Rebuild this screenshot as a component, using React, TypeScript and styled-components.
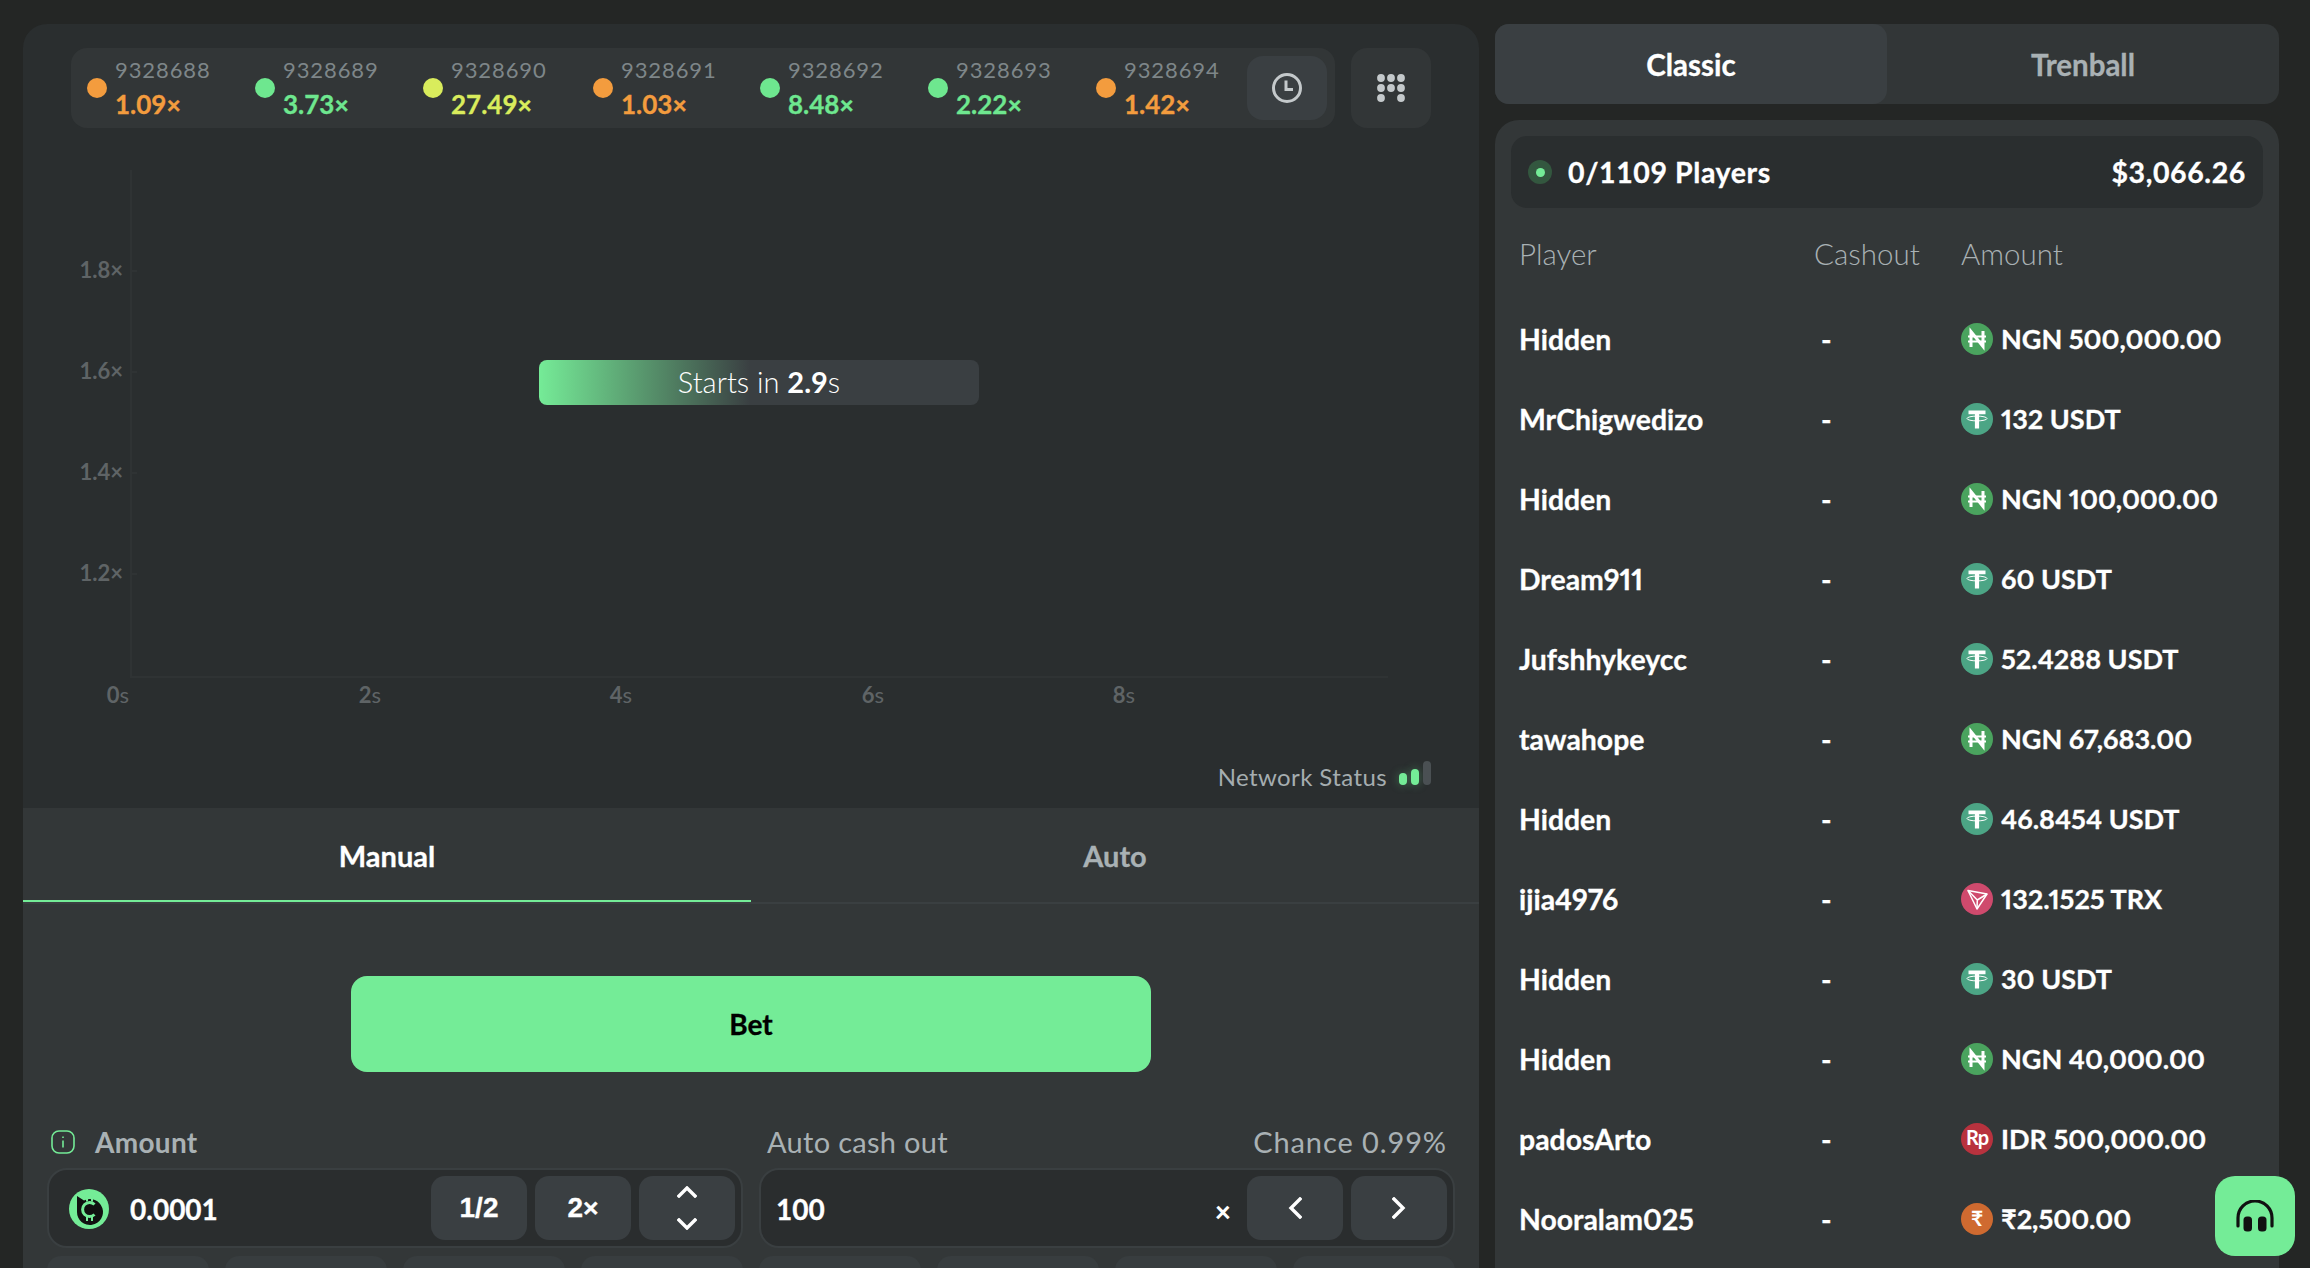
import React from "react";
import styled, { createGlobalStyle } from "styled-components";

const Global = createGlobalStyle`
  html, body { margin: 0; height: 100%; overflow: hidden; background: #242625; }
  #root { height: 100%; }
  * { box-sizing: border-box; }
  body { font-family: "Lato", "Liberation Sans", sans-serif; color: #fff; }
`;

const Page = styled.div`
  display: flex;
  gap: 16px;
  height: 1268px;
  padding: 24px 31px 0 23px;
  overflow: hidden;
  background: #242625;
`;

const LeftColumn = styled.main`
  flex: 0 0 1456px;
  display: flex;
  flex-direction: column;
  border-radius: 24px 24px 0 0;
  overflow: hidden;
  background: #2a2e2f;
`;

const ChartSection = styled.section`
  flex: 0 0 784px;
  display: flex;
  flex-direction: column;
  position: relative;
`;

const Toolbar = styled.div`
  display: flex;
  gap: 16px;
  padding: 24px 48px 0;
`;

const History = styled.div`
  flex: 1;
  height: 80px;
  display: flex;
  align-items: center;
  padding: 0 8px 0 16px;
  border-radius: 16px;
  background: #323637;
`;

const Round = styled.div<{ $w: number }>`
  flex: 0 0 ${(p) => p.$w}px;
  display: flex;
  align-items: center;
  gap: 8px;
  &:last-of-type { flex: 1; }
`;

const Dot = styled.span<{ $c: string }>`
  width: 20px;
  height: 20px;
  border-radius: 50%;
  background: ${(p) => p.$c};
`;

const RoundText = styled.div`
  display: flex;
  flex-direction: column;
`;

const RoundId = styled.span`
  font-size: 22px;
  line-height: 32px;
  letter-spacing: 0.9px;
  color: #7e8689;
`;

const RoundMult = styled.span<{ $c: string }>`
  font-size: 26px;
  line-height: 36px;
  font-weight: 700;
  -webkit-text-stroke: 0.3px currentColor;
  color: ${(p) => p.$c};
`;

const Times = styled.span`
  font-size: 0.95em;
  font-weight: 900;
`;

const SquareButton = styled.button<{ $tone: string; $w?: number; $h?: number; $r?: number }>`
  flex: 0 0 auto;
  width: ${(p) => p.$w ?? 80}px;
  height: ${(p) => p.$h ?? 64}px;
  display: flex;
  align-items: center;
  justify-content: center;
  padding: 0;
  border: 0;
  border-radius: ${(p) => p.$r ?? 14}px;
  background: ${(p) => p.$tone};
  color: #c4c9cb;
`;

const ChartCanvas = styled.div`
  position: relative;
  flex: 1;
`;

const ChartSvg = styled.svg`
  display: block;
  text {
    font-family: "Lato", "Liberation Sans", sans-serif;
    font-size: 22px;
    font-weight: 700;
    fill: #5f6466;
  }
  tspan { font-weight: 400; }
`;

const CountdownPill = styled.div`
  position: absolute;
  left: 516px;
  top: 232px;
  width: 440px;
  height: 45px;
  display: flex;
  align-items: center;
  justify-content: center;
  padding-bottom: 3px;
  border-radius: 8px;
  font-size: 29px;
  font-weight: 300;
  background: linear-gradient(90deg, #75eb97 0%, rgba(117, 235, 151, 0) 48%), #3a3f42;
  b { font-weight: 700; }
`;

const NetworkStatus = styled.div`
  position: absolute;
  right: 48px;
  bottom: 16px;
  display: flex;
  align-items: flex-end;
  gap: 12px;
  font-size: 24px;
  line-height: 30px;
  letter-spacing: 0.4px;
  color: #a5adb0;
`;

const Bars = styled.div`
  display: flex;
  align-items: flex-end;
  gap: 4px;
  margin-bottom: 7px;
`;

const Bar = styled.span<{ $h: number; $on?: boolean }>`
  width: 8px;
  height: ${(p) => p.$h}px;
  border-radius: 4px;
  background: ${(p) => (p.$on ? "#74ec97" : "#4a5053")};
  box-shadow: ${(p) => (p.$on ? "0 0 10px rgba(116,236,151,.35)" : "none")};
`;

const Controls = styled.section`
  flex: 1;
  background: #333738;
`;

const ModeTabs = styled.div`
  display: flex;
  height: 96px;
  border-bottom: 2px solid #3a3f41;
`;

const ModeTab = styled.div<{ $active?: boolean }>`
  flex: 1;
  height: 94px;
  display: flex;
  align-items: center;
  justify-content: center;
  padding-top: 2px;
  font-size: 29px;
  font-weight: 700;
  -webkit-text-stroke: 0.3px currentColor;
  color: ${(p) => (p.$active ? "#fff" : "#a9b1b4")};
  border-bottom: 2px solid ${(p) => (p.$active ? "#74ec97" : "transparent")};
`;

const ControlsBody = styled.div`
  padding: 72px 24px 0;
`;

const BetButton = styled.button`
  display: block;
  width: 800px;
  height: 96px;
  margin: 0 auto;
  border: 0;
  border-radius: 16px;
  background: #74ec97;
  color: #000;
  font: 700 28px "Lato", "Liberation Sans", sans-serif;
  -webkit-text-stroke: 0.3px #000;
`;

const FormGrid = styled.div`
  display: grid;
  grid-template-columns: 1fr 1fr;
  column-gap: 16px;
  margin-top: 48px;
`;

const LabelRow = styled.div`
  height: 48px;
  display: flex;
  align-items: center;
  justify-content: space-between;
  padding-bottom: 5px;
  font-size: 29px;
  letter-spacing: 0.3px;
  color: #a9b1b4;
`;

const LabelLeft = styled.span<{ $bold?: boolean }>`
  display: flex;
  align-items: center;
  gap: 20px;
  padding-left: ${(p) => (p.$bold ? 4 : 8)}px;
  font-weight: ${(p) => (p.$bold ? 700 : 400)};
  font-size: ${(p) => (p.$bold ? 28 : 29)}px;
`;

const ChanceText = styled.span`
  padding-right: 8px;
  letter-spacing: 0.9px;
`;

const InputBox = styled.div<{ $pad: number }>`
  height: 80px;
  display: flex;
  align-items: center;
  gap: 8px;
  padding: 0 6px 0 ${(p) => p.$pad}px;
  border: 2px solid #3a3f41;
  border-radius: 20px;
  background: #2a2d2e;
`;

const InputValue = styled.span`
  flex: 1;
  display: flex;
  align-items: center;
  gap: 21px;
  padding-top: 2px;
  font-size: 28px;
  font-weight: 700;
  -webkit-text-stroke: 0.3px currentColor;
`;

const SuffixX = styled.span`
  font-size: 28px;
  font-weight: 900;
  margin-right: 8px;
  padding-top: 6px;
`;

const QuickRow = styled.div`
  display: grid;
  grid-template-columns: repeat(4, 1fr);
  gap: 16px;
  margin-top: 8px;
`;

const QuickButton = styled.div`
  height: 64px;
  border-radius: 14px;
  background: #383d3f;
`;

const StepText = styled.span`
  font-size: 28px;
  font-weight: 700;
  -webkit-text-stroke: 0.3px currentColor;
  color: #fff;
`;

const StepStack = styled.span`
  display: flex;
  flex-direction: column;
  gap: 20px;
`;

const RightColumn = styled.aside`
  flex: 0 0 784px;
  display: flex;
  flex-direction: column;
  gap: 16px;
`;

const GameTabs = styled.div`
  height: 80px;
  display: flex;
  border-radius: 14px;
  background: #323637;
`;

const GameTab = styled.div<{ $active?: boolean }>`
  flex: 1;
  display: flex;
  align-items: center;
  justify-content: center;
  border-radius: 14px;
  font-size: 29.5px;
  font-weight: 700;
  -webkit-text-stroke: 0.3px currentColor;
  background: ${(p) => (p.$active ? "#3a3f42" : "transparent")};
  color: ${(p) => (p.$active ? "#fff" : "#a9b1b4")};
`;

const PlayersPanel = styled.div`
  flex: 1;
  padding: 16px 16px 0;
  border-radius: 24px 24px 0 0;
  background: #333738;
`;

const Summary = styled.div`
  height: 72px;
  display: flex;
  align-items: center;
  justify-content: space-between;
  padding: 0 17px;
  border-radius: 16px;
  background: #2a2e2f;
  font-size: 28.5px;
  font-weight: 700;
  letter-spacing: 0.6px;
  -webkit-text-stroke: 0.3px currentColor;
`;

const SummaryLeft = styled.span`
  display: flex;
  align-items: center;
  gap: 16px;
`;

const LiveDot = styled.span`
  width: 24px;
  height: 24px;
  display: flex;
  align-items: center;
  justify-content: center;
  border-radius: 50%;
  background: #33573f;
  &::after {
    content: "";
    width: 9px;
    height: 9px;
    border-radius: 50%;
    background: #74ec97;
  }
`;

const PlayerRow = styled.div<{ $head?: boolean }>`
  display: grid;
  grid-template-columns: 295px 147px 1fr;
  align-items: center;
  height: ${(p) => (p.$head ? 90 : 80)}px;
  padding-left: 8px;
  font-size: ${(p) => (p.$head ? 29.5 : 28.4)}px;
  font-weight: ${(p) => (p.$head ? 300 : 700)};
  font-variant-numeric: proportional-nums;
  padding-top: ${(p) => (p.$head ? 0 : 1)}px;
  -webkit-text-stroke: ${(p) => (p.$head ? "0" : "0.3px currentColor")};
  color: ${(p) => (p.$head ? "#a9b1b4" : "#fff")};
`;

const CashOut = styled.span`
  padding-left: 7px;
`;

const Stake = styled.span`
  display: flex;
  align-items: center;
  gap: 8px;
  font-size: 27px;
`;

const SupportButton = styled.button`
  position: fixed;
  left: 2215px;
  top: 1176px;
  width: 80px;
  height: 80px;
  display: flex;
  align-items: center;
  justify-content: center;
  padding: 0;
  border: 0;
  border-radius: 20px;
  background: #74ec97;
`;

const CoinSvg = styled.svg`
  display: block;
  flex: 0 0 auto;
  -webkit-text-stroke: 0;
  text { font-family: "Lato", "Liberation Sans", sans-serif; font-weight: 700; fill: #fff; }
`;

type Kind = "ngn" | "usdt" | "trx" | "idr" | "inr";

const Coin = ({ kind }: { kind: Kind }) => {
  const fill: Record<Kind, string> = { ngn: "#4aa35e", usdt: "#4ca585", trx: "#cf4a6d", idr: "#b8323e", inr: "#cf6a30" };
  return (
    <CoinSvg width="32" height="32" viewBox="0 0 32 32">
      <circle cx="16" cy="16" r="16" fill={fill[kind]} />
      {kind === "ngn" && (
        <g stroke="#fff" fill="none" strokeWidth="3">
          <path d="M10 24V8.5L22 23.5V8" />
          <path d="M7 13.5h18M7 18.5h18" strokeWidth="2.2" />
        </g>
      )}
      {kind === "usdt" && (
        <g fill="#fff">
          <path d="M7.5 7.5h17v3.8h-6.4v14.2h-4.2V11.3H7.5z" />
          <ellipse cx="16" cy="15.5" rx="10" ry="2.4" fill="none" stroke="#fff" strokeWidth="1" />
        </g>
      )}
      {kind === "trx" && (
        <g stroke="#fff" fill="none" strokeWidth="1.5" strokeLinejoin="round">
          <path d="M7 7.5l19 3.5-10 15z" />
          <path d="M7 7.5l9.3 9.5L26 11M16.3 17L16 26" />
        </g>
      )}
      {kind === "idr" && (
        <text x="16" y="22" fontSize="20" textAnchor="middle" letterSpacing="-1">Rp</text>
      )}
      {kind === "inr" && (
        <text x="16" y="23" fontSize="21" textAnchor="middle">₹</text>
      )}
    </CoinSvg>
  );
};

const BrandCoin = () => (
  <CoinSvg width="40" height="40" viewBox="0 0 40 40">
    <circle cx="20" cy="20" r="20" fill="#74ec97" />
    <path d="M8 7l7 4.5a13 13 0 1 1-7 11.5z" fill="#111" />
    <path d="M25.5 15.5a7 7 0 1 0 0 10" fill="none" stroke="#74ec97" strokeWidth="3" />
    <path d="M18 8.5v4M23 8.5v4M18 28v4M23 28v4" stroke="#74ec97" strokeWidth="2" />
  </CoinSvg>
);

const Chevron = ({ d, w, h }: { d: string; w: number; h: number }) => (
  <svg width={w} height={h} viewBox={`0 0 ${w} ${h}`} fill="none" stroke="#fff" strokeWidth="3.4" strokeLinecap="square">
    <path d={d} />
  </svg>
);

const ClockIcon = () => (
  <svg width="32" height="32" viewBox="0 0 32 32" fill="none" stroke="#c4c9cb" strokeWidth="3">
    <circle cx="16" cy="16" r="13.5" />
    <path d="M15 8.5V17.5H22" />
  </svg>
);

const GridIcon = () => {
  const pts = [[0, 0], [1, 0], [2, 0], [0, 1], [1, 1], [2, 1], [0, 2], [2, 2]];
  return (
    <svg width="28" height="28" viewBox="0 0 28 28">
      {pts.map(([x, y]) => (
        <circle key={`${x}${y}`} cx={4 + x * 10} cy={4 + y * 10} r="3.9" fill="#c4c9cb" />
      ))}
    </svg>
  );
};

const rounds: [string, string, string, number][] = [
  ["9328688", "1.09", "#f39c3e", 168],
  ["9328689", "3.73", "#6ee78f", 168],
  ["9328690", "27.49", "#d9ec5c", 170],
  ["9328691", "1.03", "#f39c3e", 167],
  ["9328692", "8.48", "#6ee78f", 168],
  ["9328693", "2.22", "#6ee78f", 168],
  ["9328694", "1.42", "#f39c3e", 168],
];

const players: [string, Kind, string][] = [
  ["Hidden", "ngn", "NGN 500,000.00"],
  ["MrChigwedizo", "usdt", "132 USDT"],
  ["Hidden", "ngn", "NGN 100,000.00"],
  ["Dream911", "usdt", "60 USDT"],
  ["Jufshhykeycc", "usdt", "52.4288 USDT"],
  ["tawahope", "ngn", "NGN 67,683.00"],
  ["Hidden", "usdt", "46.8454 USDT"],
  ["ijia4976", "trx", "132.1525 TRX"],
  ["Hidden", "usdt", "30 USDT"],
  ["Hidden", "ngn", "NGN 40,000.00"],
  ["padosArto", "idr", "IDR 500,000.00"],
  ["Nooralam025", "inr", "₹2,500.00"],
];

const yTicks = [["1.8", 143], ["1.6", 244], ["1.4", 345], ["1.2", 446]] as const;
const xTicks = [["0", 95], ["2", 347], ["4", 598], ["6", 850], ["8", 1101]] as const;

export default function App() {
  return (
    <Page>
      <Global />
      <LeftColumn>
        <ChartSection>
          <Toolbar>
            <History>
              {rounds.map(([id, mult, color, w]) => (
                <Round key={id} $w={w}>
                  <Dot $c={color} />
                  <RoundText>
                    <RoundId>{id}</RoundId>
                    <RoundMult $c={color}>
                      {mult}
                      <Times>×</Times>
                    </RoundMult>
                  </RoundText>
                </Round>
              ))}
              <SquareButton $tone="#3a3f42" $r={16}>
                <ClockIcon />
              </SquareButton>
            </History>
            <SquareButton $tone="#323637" $h={80} $r={16}>
              <GridIcon />
            </SquareButton>
          </Toolbar>
          <ChartCanvas>
            <ChartSvg width="1456" height="680" viewBox="0 0 1456 680">
              <path d="M108 42V549H1365" fill="none" stroke="#2f3334" strokeWidth="2" />
              {yTicks.map(([label, y]) => (
                <g key={label}>
                  <path d={`M108 ${y}h6`} stroke="#2f3334" strokeWidth="2" />
                  <text x="100" y={y + 7} textAnchor="end">{label}×</text>
                </g>
              ))}
              {xTicks.map(([label, x]) => (
                <text key={label} x={x} y="575" textAnchor="middle">{label}<tspan>s</tspan></text>
              ))}
            </ChartSvg>
            <CountdownPill>
              <span>Starts in <b>2.9</b>s</span>
            </CountdownPill>
            <NetworkStatus>
              Network Status
              <Bars>
                <Bar $h={12} $on />
                <Bar $h={16} $on />
                <Bar $h={24} />
              </Bars>
            </NetworkStatus>
          </ChartCanvas>
        </ChartSection>
        <Controls>
          <ModeTabs>
            <ModeTab $active>Manual</ModeTab>
            <ModeTab>Auto</ModeTab>
          </ModeTabs>
          <ControlsBody>
            <BetButton>Bet</BetButton>
            <FormGrid>
              <div>
                <LabelRow>
                  <LabelLeft $bold>
                    <svg width="24" height="24" viewBox="0 0 24 24" fill="none" stroke="#74ec97" strokeWidth="1.6">
                      <rect x="1" y="1" width="22" height="22" rx="7" />
                      <path d="M12 10.5v7M12 6.5v1.6" />
                    </svg>
                    Amount
                  </LabelLeft>
                </LabelRow>
                <InputBox $pad={20}>
                  <InputValue>
                    <BrandCoin />
                    0.0001
                  </InputValue>
                  <SquareButton $tone="#3a3f42" $w={96}><StepText>1/2</StepText></SquareButton>
                  <SquareButton $tone="#3a3f42" $w={96}><StepText>2<Times>×</Times></StepText></SquareButton>
                  <SquareButton $tone="#3a3f42" $w={96}>
                    <StepStack>
                      <Chevron w={20} h={12} d="M2 10L10 2L18 10" />
                      <Chevron w={20} h={12} d="M2 2L10 10L18 2" />
                    </StepStack>
                  </SquareButton>
                </InputBox>
                <QuickRow>
                  <QuickButton />
                  <QuickButton />
                  <QuickButton />
                  <QuickButton />
                </QuickRow>
              </div>
              <div>
                <LabelRow>
                  <LabelLeft>Auto cash out</LabelLeft>
                  <ChanceText>Chance 0.99%</ChanceText>
                </LabelRow>
                <InputBox $pad={15}>
                  <InputValue>100</InputValue>
                  <SuffixX>×</SuffixX>
                  <SquareButton $tone="#3a3f42" $w={96}>
                    <Chevron w={14} h={22} d="M12 2L3 11L12 20" />
                  </SquareButton>
                  <SquareButton $tone="#3a3f42" $w={96}>
                    <Chevron w={14} h={22} d="M2 2L11 11L2 20" />
                  </SquareButton>
                </InputBox>
                <QuickRow>
                  <QuickButton />
                  <QuickButton />
                  <QuickButton />
                  <QuickButton />
                </QuickRow>
              </div>
            </FormGrid>
          </ControlsBody>
        </Controls>
      </LeftColumn>
      <RightColumn>
        <GameTabs>
          <GameTab $active>Classic</GameTab>
          <GameTab>Trenball</GameTab>
        </GameTabs>
        <PlayersPanel>
          <Summary>
            <SummaryLeft>
              <LiveDot />
              0/1109 Players
            </SummaryLeft>
            <span>$3,066.26</span>
          </Summary>
          <PlayerRow $head>
            <span>Player</span>
            <span>Cashout</span>
            <span>Amount</span>
          </PlayerRow>
          {players.map(([name, kind, amount], i) => (
            <PlayerRow key={i}>
              <span>{name}</span>
              <CashOut>-</CashOut>
              <Stake>
                <Coin kind={kind} />
                {amount}
              </Stake>
            </PlayerRow>
          ))}
        </PlayersPanel>
      </RightColumn>
      <SupportButton aria-label="Support">
        <svg width="38" height="32" viewBox="0 0 38 32" fill="none">
          <path d="M2 26V18a17 17 0 0 1 34 0v8" stroke="#111" strokeWidth="3.2" strokeLinecap="round" />
          <rect x="7.5" y="16.5" width="8.5" height="15" rx="3.5" fill="#111" />
          <rect x="22" y="16.5" width="8.5" height="15" rx="3.5" fill="#111" />
        </svg>
      </SupportButton>
    </Page>
  );
}
